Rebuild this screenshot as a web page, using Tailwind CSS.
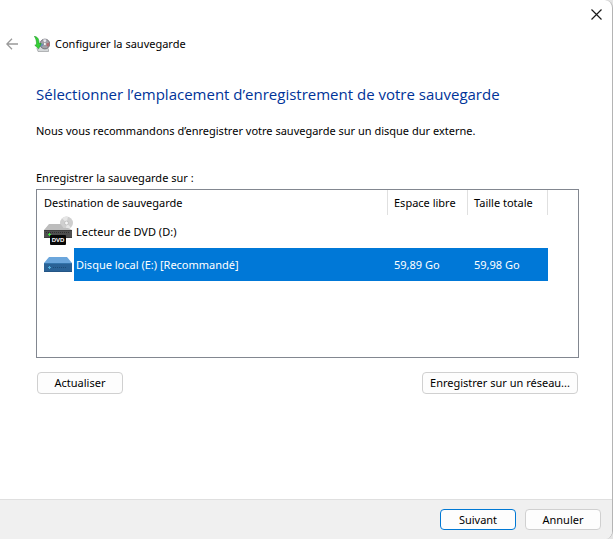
<!DOCTYPE html>
<html lang="fr">
<head>
    <meta charset="UTF-8">
    <meta name="viewport" content="width=device-width, initial-scale=1.0">
    <title>Configurer la sauvegarde</title>
    <script src="https://cdn.jsdelivr.net/npm/@tailwindcss/browser@4"></script>
</head>
<body class="bg-[#e4e4e4] text-black text-[11px] leading-4 font-['Noto_Sans',sans-serif]">
    <div class="min-h-screen flex flex-col bg-white border-r border-[#b4b4b4] rounded-r-lg overflow-hidden">
        <!-- Barre de titre -->
        <div class="flex justify-end h-7">
            <button type="button" aria-label="Fermer" class="w-[31px] flex items-center justify-center">
                <svg class="w-[11px] h-[11px]" viewBox="0 0 11 11" fill="none" stroke="#1a1a1a" stroke-width="1.2">
                    <path d="M.5 .5l10 10M10.500 .5l-10 10"/>
                </svg>
            </button>
        </div>

        <header class="flex items-center h-8 pl-1.5">
            <button type="button" aria-label="Retour" disabled class="w-3 mr-4">
                <svg class="w-3 h-3" viewBox="0 0 12 12" fill="none" stroke="#999" stroke-width="1.3">
                    <path d="M12 6H1M6 .8L.8 6 6 11.200"/>
                </svg>
            </button>
            <svg class="w-4 h-4 mr-[5px]" viewBox="0 0 16 16">
                <path d="M3 12.500l2-2h8l1.500 3v2H4z" fill="#d5d8da" stroke="#8b8f92" stroke-width=".6"/>
                <circle cx="10.900" cy="8" r="4.900" fill="#a3a1a8" stroke="#66666c" stroke-width=".8"/>
                <path d="M10.900 8L9 3.500a4.700 4.700 0 0 1 3.500 0z" fill="#e8e8f0"/>
                <path d="M10.900 8l4.300-1.500a4.700 4.700 0 0 1-1 4.500z" fill="#b06a70"/>
                <path d="M10.900 8L7 11a4.700 4.700 0 0 1-.8-3.600z" fill="#6d8fb8"/>
                <circle cx="10.900" cy="8" r="1.500" fill="#fff" stroke="#77757c" stroke-width=".6"/>
                <path d="M.3 .3C3.500 .8 5.200 3 5 7.500L7.200 7.500 4.600 12.800 .8 9.200l1.700-.6C2.600 5 2 2.500 .3 .3z" fill="#35d035" stroke="#1f9a26" stroke-width=".6"/>
            </svg>
            <span>Configurer la sauvegarde</span>
        </header>

        <main class="flex-1 pl-9 pr-[33px] pt-6">
            <h1 class="text-[15px] leading-5 text-[#003399] font-['Open_Sans',sans-serif]">Sélectionner l’emplacement d’enregistrement de votre sauvegarde</h1>
            <p class="mt-[19px]">Nous vous recommandons d’enregistrer votre sauvegarde sur un disque dur externe.</p>
            <p id="listLabel" class="mt-[31px]">Enregistrer la sauvegarde sur :</p>

            <div class="mt-[3px] h-[169px] border border-[#828790]">
                <table aria-labelledby="listLabel" class="w-full table-fixed border-separate border-spacing-0 text-left">
                    <colgroup>
                        <col class="w-[37px]">
                        <col>
                        <col class="w-20">
                        <col class="w-20">
                        <col class="w-[30px]">
                    </colgroup>
                    <thead>
                        <tr class="h-[25px]">
                            <th colspan="2" class="font-normal pl-[7px] border-r border-[#e0e0e0]">Destination de sauvegarde</th>
                            <th class="font-normal pl-1.5 border-r border-[#e0e0e0]">Espace libre</th>
                            <th class="font-normal pl-1.5 border-r border-[#e0e0e0]">Taille totale</th>
                            <td></td>
                        </tr>
                    </thead>
                    <tbody>
                        <tr class="h-[33px]">
                            <td class="p-0 pl-[7px]">
                                <svg class="w-[30px] h-8" viewBox="0 0 30 32">
                                    <circle cx="22.500" cy="7" r="6.500" fill="#cfcfcf"/>
                                    <path d="M22.500 7L18 2.300A6.500 6.500 0 0 1 24 .7zM22.500 7l4.500 4.700a6.500 6.500 0 0 1-5 1.800z" fill="#e6e6e6"/>
                                    <circle cx="22.500" cy="7" r="1.900" fill="#f8f8f8" stroke="#b5b5b5" stroke-width=".7"/>
                                    <path d="M5 8h11.500l3 4h4.500l4 2H0z" fill="#bdbdbd"/>
                                    <path d="M0 14h28v8H0z" fill="#4f4f4f"/>
                                    <path d="M0 14.500h28" stroke="#3d3d3d"/>
                                    <path d="M2 16.500h24" stroke="#303030" stroke-dasharray="1 1"/>
                                    <path d="M0 21.500h28" stroke="#3d3d3d"/>
                                    <path d="M4 18.500h3M5.500 17v3" stroke="#3fe83f"/>
                                    <rect x="6" y="19" width="16" height="10" rx="1" fill="#080808"/>
                                    <text x="14" y="26" text-anchor="middle" font-family="Liberation Sans, sans-serif" font-size="6" font-weight="700" fill="#fff">DVD</text>
                                </svg>
                            </td>
                            <td class="pl-0.5">Lecteur de DVD (D:)</td>
                            <td></td>
                            <td></td>
                            <td></td>
                        </tr>
                        <tr class="h-[33px]" aria-selected="true">
                            <td class="p-0 pl-[7px]">
                                <svg class="w-7 h-4" viewBox="0 0 28 16">
                                    <path d="M5 0h18l5 6H0z" fill="#6ba6dc"/>
                                    <path d="M0 6h28v9H0z" fill="#2a6296"/>
                                    <path d="M0 6.500h28" stroke="#3474ab"/>
                                    <path d="M0 14.500h28" stroke="#235585"/>
                                    <path d="M4 10.500h3M5.500 9v3" stroke="#55b3e0"/>
                                    <path d="M9 10.500h14" stroke="#1d4c78" stroke-dasharray="1 1"/>
                                </svg>
                            </td>
                            <td class="pl-0.5 bg-[#0078d7] text-white">Disque local (E:) [Recommandé]</td>
                            <td class="pl-1.5 bg-[#0078d7] text-white">59,89 Go</td>
                            <td class="pl-1.5 bg-[#0078d7] text-white">59,98 Go</td>
                            <td></td>
                        </tr>
                    </tbody>
                </table>
            </div>

            <div class="flex justify-between mt-3.5 px-px">
                <button type="button" class="w-[86px] h-[22px] flex items-center justify-center bg-[#fdfdfd] border border-[#d0d0d0] rounded">Actualiser</button>
                <button type="button" class="w-[156px] h-[22px] flex items-center justify-center bg-[#fdfdfd] border border-[#d0d0d0] rounded whitespace-nowrap">Enregistrer sur un réseau...</button>
            </div>
        </main>

        <footer class="flex justify-end gap-[9px] h-10 pt-[9px] pr-[11px] bg-[#f0f0f0] border-t border-[#dfdfdf]">
            <button type="submit" class="w-[76px] h-[21px] flex items-center justify-center bg-[#fdfdfd] border border-[#0078d4] rounded">Suivant</button>
            <button type="button" class="w-[76px] h-[21px] flex items-center justify-center bg-[#fdfdfd] border border-[#d0d0d0] rounded">Annuler</button>
        </footer>
    </div>
</body>
</html>
